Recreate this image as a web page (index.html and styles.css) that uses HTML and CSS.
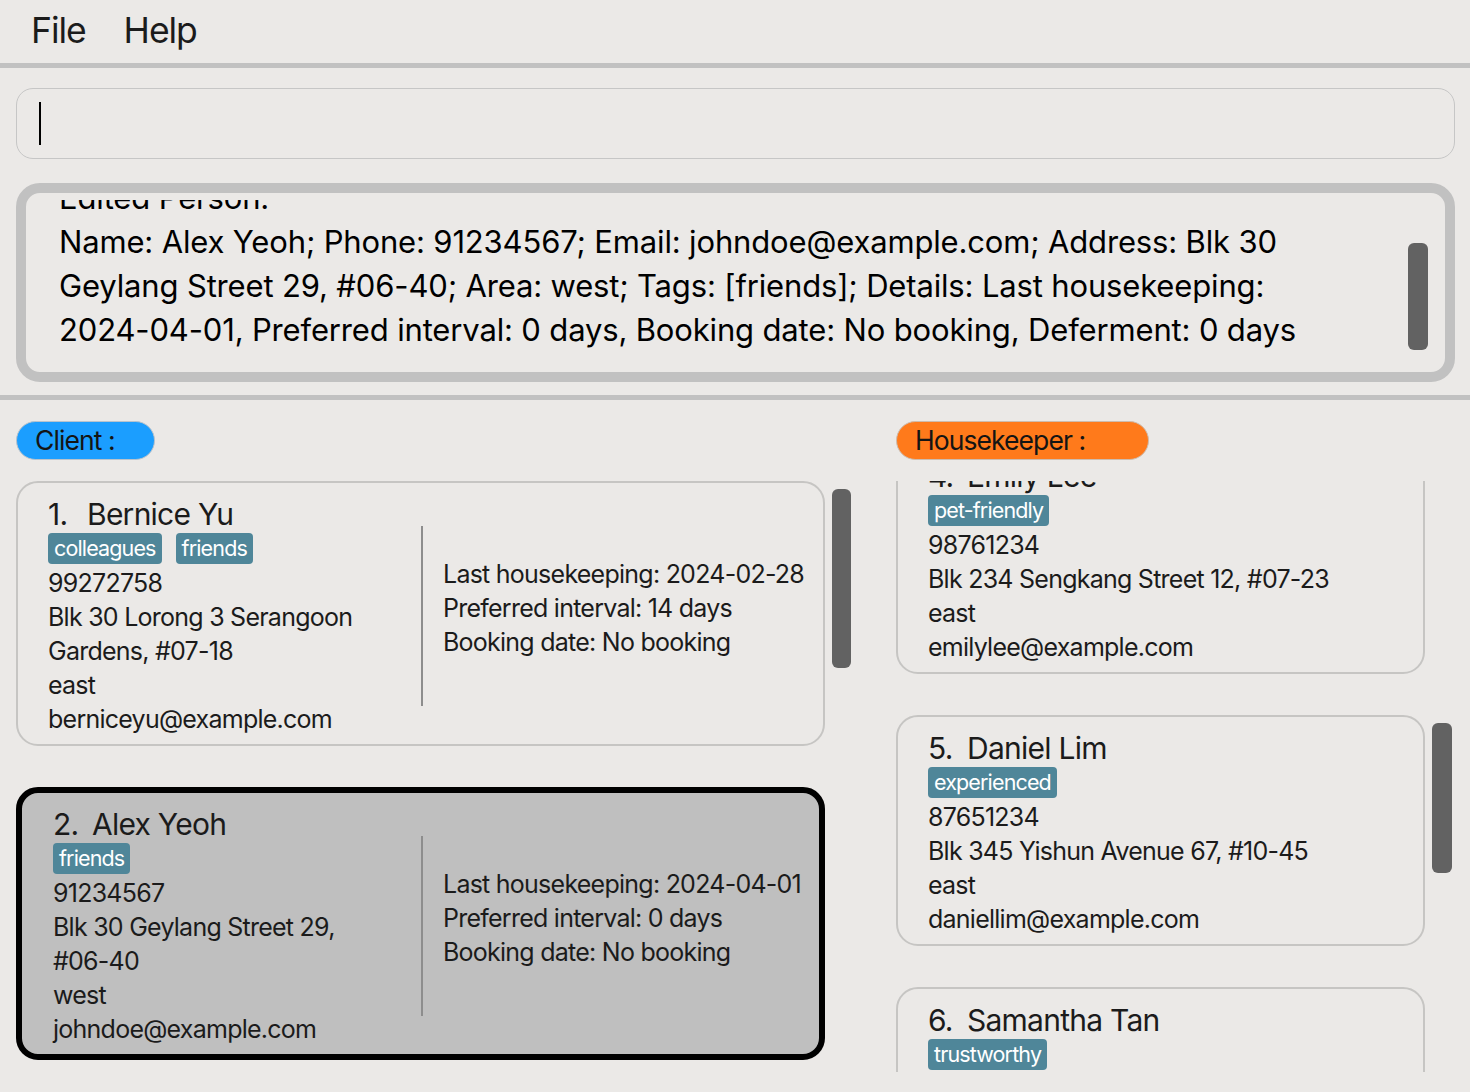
FILE: index.html
```html
<!DOCTYPE html>
<html lang="en">
<head>
<meta charset="utf-8">
<title>Address Book</title>
<link rel="stylesheet" href="styles.css">
</head>
<body>
<div class="menubar">
  <span class="menu-item">File</span>
  <span class="menu-item">Help</span>
</div>

<div class="command-box"><span class="caret"></span></div>

<div class="result-box">
  <div class="result-view">
    <div class="result-clip">
      <div class="result-text">Edited Person:<br>Name: Alex Yeoh; Phone: 91234567; Email: johndoe@example.com; Address: Blk 30<br>Geylang Street 29, #06-40; Area: west; Tags: [friends]; Details: Last housekeeping:<br>2024-04-01, Preferred interval: 0 days, Booking date: No booking, Deferment: 0 days</div>
    </div>
  </div>
  <div class="scroll-track result-track"><div class="thumb result-thumb"></div></div>
</div>

<div class="divider-line"></div>

<div class="panels">
  <section class="panel">
    <div class="pill pill-client">Client :</div>
    <div class="list">
      <div class="list-view">
        <div class="cards">
          <div class="card">
            <div class="card-left">
              <div class="name"><span class="idx">1.</span>Bernice Yu</div>
              <div class="tags"><span class="tag">colleagues</span><span class="tag">friends</span></div>
              <div class="line">99272758</div>
              <div class="line">Blk 30 Lorong 3 Serangoon<br>Gardens, #07-18</div>
              <div class="line">east</div>
              <div class="line">berniceyu@example.com</div>
            </div>
            <div class="vrule"></div>
            <div class="card-right">
              <div class="line">Last housekeeping: 2024-02-28</div>
              <div class="line">Preferred interval: 14 days</div>
              <div class="line">Booking date: No booking</div>
            </div>
          </div>
          <div class="card selected">
            <div class="card-left">
              <div class="name"><span class="idx">2.</span>Alex Yeoh</div>
              <div class="tags"><span class="tag">friends</span></div>
              <div class="line">91234567</div>
              <div class="line">Blk 30 Geylang Street 29,<br>#06-40</div>
              <div class="line">west</div>
              <div class="line">johndoe@example.com</div>
            </div>
            <div class="vrule"></div>
            <div class="card-right">
              <div class="line">Last housekeeping: 2024-04-01</div>
              <div class="line">Preferred interval: 0 days</div>
              <div class="line">Booking date: No booking</div>
            </div>
          </div>
        </div>
      </div>
      <div class="scroll-track client-track"><div class="thumb client-thumb"></div></div>
    </div>
  </section>

  <section class="panel">
    <div class="pill pill-hk">Housekeeper :</div>
    <div class="list">
      <div class="list-view">
        <div class="cards scrolled">
          <div class="card hk">
            <div class="card-left">
              <div class="name"><span class="idx">4.</span>Emily Lee</div>
              <div class="tags"><span class="tag">pet-friendly</span></div>
              <div class="line">98761234</div>
              <div class="line">Blk 234 Sengkang Street 12, #07-23</div>
              <div class="line">east</div>
              <div class="line">emilylee@example.com</div>
            </div>
          </div>
          <div class="card hk">
            <div class="card-left">
              <div class="name"><span class="idx">5.</span>Daniel Lim</div>
              <div class="tags"><span class="tag">experienced</span></div>
              <div class="line">87651234</div>
              <div class="line">Blk 345 Yishun Avenue 67, #10-45</div>
              <div class="line">east</div>
              <div class="line">daniellim@example.com</div>
            </div>
          </div>
          <div class="card hk">
            <div class="card-left">
              <div class="name"><span class="idx">6.</span>Samantha Tan</div>
              <div class="tags"><span class="tag">trustworthy</span></div>
              <div class="line">65432178</div>
              <div class="line">Blk 12 Tampines Street 45, #03-12</div>
              <div class="line">east</div>
              <div class="line">samanthatan@example.com</div>
            </div>
          </div>
        </div>
      </div>
      <div class="scroll-track"><div class="thumb hk-thumb"></div></div>
    </div>
  </section>
</div>
</body>
</html>
```

FILE: styles.css
```css
* { box-sizing: border-box; }

html, body {
  margin: 0;
  padding: 0;
  background: #ebe9e7;
  width: 1470px;
  height: 1092px;
  overflow: hidden;
}

body {
  font-family: Inter, "Noto Sans", "Liberation Sans", sans-serif;
  color: #1b1b1b;
  letter-spacing: -0.047em;
}

.menubar {
  height: 68px;
  display: flex;
  align-items: center;
  gap: 38px;
  padding: 0 0 2px 31px;
  border-bottom: 5px solid #c1c1c1;
  font-size: 35.5px;
  letter-spacing: -0.03em;
}

.command-box {
  margin: 20px 15px 0 16px;
  height: 71px;
  border: 1.5px solid #c6c6c6;
  border-radius: 17px;
  display: flex;
  align-items: center;
  padding-left: 22px;
}

.caret {
  width: 2px;
  height: 43px;
  background: #000;
}

.result-box {
  margin: 24px 15px 0 16px;
  height: 199px;
  border: 10px solid #c1c1c1;
  border-radius: 24px;
  display: flex;
}

.result-view {
  flex: 1;
  padding: 7px 0 0 33px;
  display: flex;
}

.result-clip {
  flex: 1;
  overflow: hidden;
}

.result-text {
  margin-top: -24px;
  font-size: 31px;
  line-height: 44px;
  color: #000;
  white-space: nowrap;
  letter-spacing: -0.005em;
}

.scroll-track {
  width: 20px;
  flex: none;
}

.result-track {
  margin-right: 17px;
}

.client-track {
  width: 19px;
}

.thumb {
  width: 100%;
  background: #626262;
  border-radius: 6px;
}

.result-thumb {
  margin-top: 50px;
  height: 107px;
}

.divider-line {
  margin-top: 13px;
  height: 5px;
  background: #c1c1c1;
}

.panels {
  display: grid;
  grid-template-columns: 835px 556px;
  column-gap: 45px;
  padding-left: 16px;
  margin-top: 21px;
}

.pill {
  height: 39px;
  border-radius: 20px;
  border: 1.5px solid #b9c3cc;
  font-size: 26.5px;
  line-height: 36px;
  padding-left: 18px;
  color: #141414;
  letter-spacing: -0.035em;
}

.pill-client {
  width: 139px;
  background: #1b9eff;
}

.pill-hk {
  width: 253px;
  background: #ff7a1b;
  border-color: #cdbcae;
}

.list {
  margin-top: 21px;
  height: 591px;
  display: flex;
  gap: 7px;
}

.list-view {
  flex: 1;
  overflow: hidden;
}

.cards {
  display: flex;
  flex-direction: column;
  gap: 41px;
}

.cards.scrolled {
  margin-top: -38px;
}

.card {
  border: 2px solid #c6c5c3;
  border-radius: 22px;
  display: flex;
  padding: 13px 0 8px 30px;
}

.card.selected {
  border: 6px solid #000;
  background: #bfbfbf;
  padding-left: 31px;
}

.card-left {
  width: 373px;
  flex: none;
}

.card.selected .card-left {
  width: 368px;
}

.card.hk .card-left {
  width: auto;
}

.name {
  font-size: 30px;
  line-height: 36px;
  white-space: nowrap;
  letter-spacing: -0.025em;
}

.idx {
  display: inline-block;
  width: 39px;
}

.tags {
  margin-top: 1px;
  display: flex;
  gap: 14px;
  height: 31px;
  margin-bottom: 2px;
}

.tag {
  background: #4f8699;
  color: #fff;
  border-radius: 4px;
  font-size: 21.5px;
  line-height: 31px;
  padding: 0 6px;
  letter-spacing: -0.04em;
}

.line {
  font-size: 25px;
  line-height: 34px;
  white-space: nowrap;
}

.vrule {
  width: 2px;
  height: 180px;
  align-self: center;
  background: #8d8d8d;
  flex: none;
}

.card-right {
  padding-left: 20px;
  align-self: center;
  padding-bottom: 16px;
}

.client-thumb {
  margin-top: 8px;
  height: 179px;
}

.hk-thumb {
  margin-top: 242px;
  height: 150px;
}
```
